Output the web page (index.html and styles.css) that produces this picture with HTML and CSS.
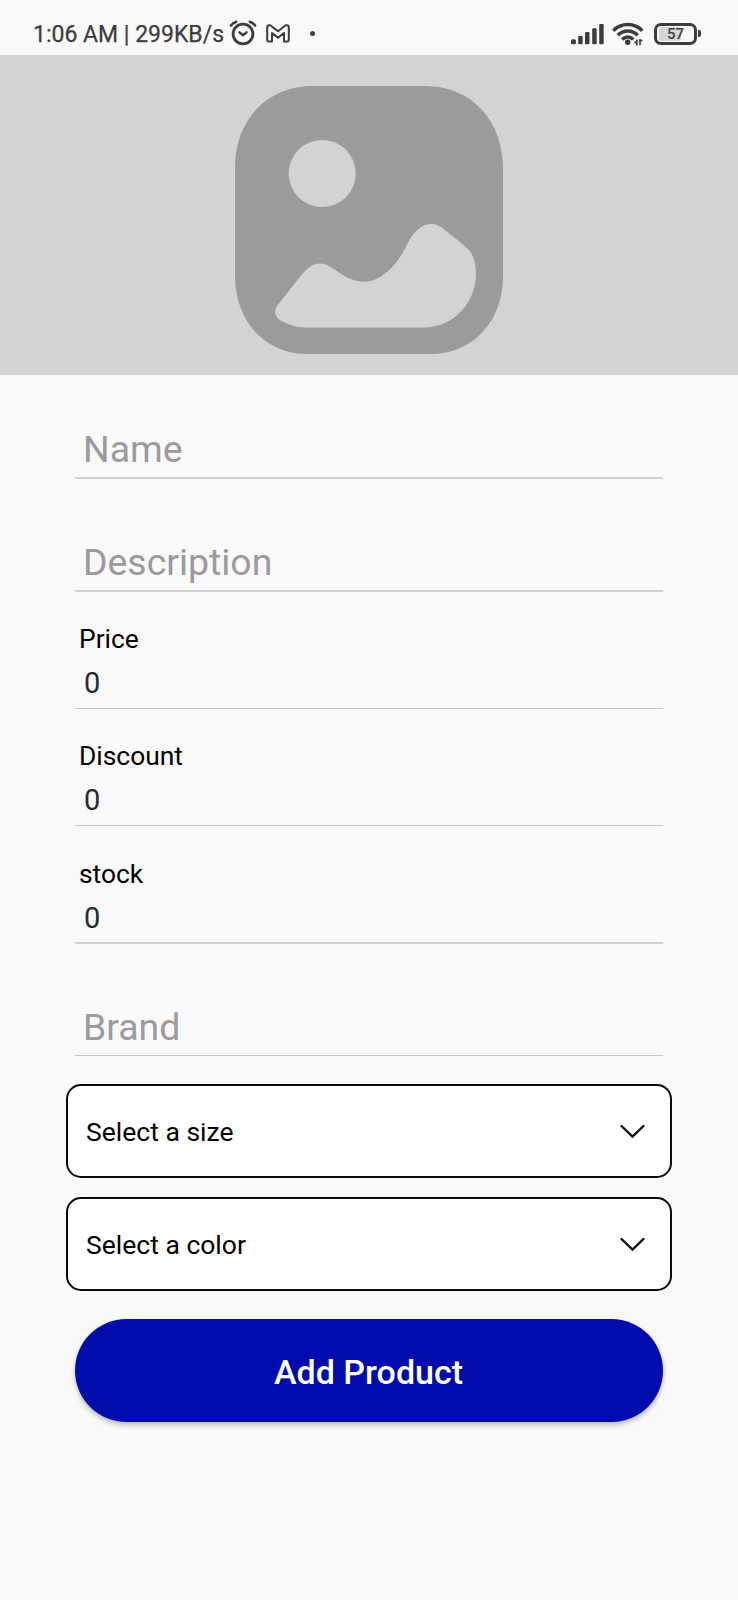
FILE: index.html
```html
<!DOCTYPE html>
<html lang="en">
<head>
<meta charset="utf-8">
<title>Add Product</title>
<link rel="stylesheet" href="styles.css">
</head>
<body>
<header class="status">
  <span class="status-text">1:06 AM | 299KB/s</span>
  <svg class="alarm" width="28" height="26" viewBox="0 0 28 26" fill="none" stroke="#3c3c3c" stroke-linecap="round">
    <circle cx="14" cy="14" r="9.9" stroke-width="2.8"/>
    <path d="M1.9 5.6Q4 2.700 7.200 1.700M26.100 5.600Q24 2.700 20.800 1.700" stroke-width="2.500"/>
    <path d="M10.500 12.300L14 15.200L17.500 12.300" stroke-width="2.400"/>
  </svg>
  <svg class="mail" width="24" height="19" viewBox="0 0 24 19" fill="none" stroke="#3c3c3c" stroke-width="2" stroke-linejoin="round">
    <path d="M1.200 3.200Q1.200 1.200 3.200 1.200H4.300L12 7.200L19.700 1.200H20.800Q22.800 1.200 22.800 3.200V16.200Q22.800 17.600 21.400 17.600H18V9L12 13.600L6 9V17.600H2.600Q1.200 17.600 1.200 16.200Z"/>
  </svg>
  <span class="dot"></span>
  <svg class="signal" width="34" height="22" viewBox="0 0 34 22" fill="#3c3c3c">
    <rect x="0" y="16.300" width="4.900" height="5" rx="1.500"/>
    <rect x="7.200" y="13" width="4.500" height="8.300" rx="1.300"/>
    <rect x="14" y="9" width="4.500" height="12.300" rx="1.300"/>
    <rect x="21.200" y="5.300" width="4.500" height="16" rx="1.300"/>
    <rect x="28.200" y="1" width="4.500" height="20.300" rx="1.300"/>
  </svg>
  <svg class="wifi" width="32" height="24" viewBox="0 0 32 24" fill="none" stroke="#3c3c3c" stroke-width="3.500">
    <path d="M1.200 8.700C9 0.300 22.500 0.300 30.300 8.700"/>
    <path d="M5.800 13.300C11.300 7.700 20.200 7.700 25.700 13.300"/>
    <path d="M10.200 17.500C13.500 14.300 18 14.300 21.300 17.500"/>
    <circle cx="15.700" cy="20.300" r="2.700" fill="#3c3c3c" stroke="none"/>
    <path d="M22.300 20.300H24.800V23.500M24.800 17.500V23M28 17V23M28 18.500H30.500" stroke-width="1.700"/>
  </svg>
  <div class="battery"><span class="battery-fill"></span><span class="battery-num">57</span></div>
  <span class="battery-cap"></span>
</header>

<section class="hero">
  <svg width="268" height="268" viewBox="0 0 268 268">
    <path fill="#9b9b9b" d="M78 0H190C237 0 268 35 268 83V190C268 236 237 268 196 268H72C31 268 0 236 0 190V81C0 35 31 0 78 0Z"/>
    <circle cx="87.200" cy="87.500" r="33.600" fill="#d3d3d3"/>
    <path fill="#d3d3d3" d="M42 220L66 189.500C73 181 79 177.500 84.500 177.500C91 177.500 96 181 101 184.500C109 190 118 195.700 129 195.700C145 195.700 159 182 168.300 165.700L175 153C182 142 189 138 196.700 138C203 138 208 142.500 213 146.500C220 152 227 157.500 233.300 163.500C239 169 241 179 241 188C241 216 219 241.500 189 241.500H71C60 241.500 52 238 45.500 234.500C39 230 39 225 42 220Z"/>
  </svg>
</section>

<main class="form">
  <div class="field first thick"><span class="placeholder">Name</span></div>
  <div class="field tall thick"><span class="placeholder">Description</span></div>
  <div class="field number"><label class="label">Price</label><span class="value">0</span></div>
  <div class="field number"><label class="label">Discount</label><span class="value">0</span></div>
  <div class="field number last thick"><label class="label">stock</label><span class="value">0</span></div>
  <div class="field brand"><span class="placeholder">Brand</span></div>

  <div class="select">
    <span>Select a size</span>
    <svg width="26" height="16" viewBox="0 0 26 16" fill="none" stroke="#111" stroke-width="2.400" stroke-linecap="round"><path d="M2.500 3L13.500 13.500L24.500 3"/></svg>
  </div>
  <div class="select second">
    <span>Select a color</span>
    <svg width="26" height="16" viewBox="0 0 26 16" fill="none" stroke="#111" stroke-width="2.400" stroke-linecap="round"><path d="M2.500 3L13.500 13.500L24.500 3"/></svg>
  </div>
  <button class="submit" type="button">Add Product</button>
</main>
</body>
</html>
```
FILE: styles.css
```css
* { box-sizing: border-box; }
body {
  margin: 0;
  min-height: 1600px;
  background: #f9f9f9;
  font-family: Roboto, sans-serif;
}
svg { display: block; flex: none; }

.status {
  display: flex;
  align-items: flex-start;
  height: 55px;
  color: #3c3c3c;
}
.status-text {
  width: 196px;
  margin: 20px 0 0 33px;
  font-size: 23px;
  line-height: 30px;
  -webkit-text-stroke: 0.25px #3c3c3c;
  white-space: nowrap;
}
.alarm { margin: 20px 0 0; }
.mail { margin: 24px 0 0 9px; }
.dot {
  width: 5px;
  height: 5px;
  margin: 31px 0 0 20px;
  border-radius: 50%;
  background: #3c3c3c;
}
.signal { margin: 23px 0 0 auto; }
.wifi { margin: 22px 0 0 7px; }
.battery {
  position: relative;
  width: 43px;
  height: 22px;
  margin: 23px 0 0 10px;
  border: 3px solid #3c3c3c;
  border-radius: 7px;
  text-align: center;
}
.battery-fill {
  position: absolute;
  inset: 1px 13px 1px 2px;
  border-radius: 2px;
  background: #d6d6d6;
}
.battery-num {
  position: relative;
  display: block;
  font-size: 15px;
  font-weight: 500;
  line-height: 17px;
}
.battery-cap {
  width: 3px;
  height: 7px;
  margin: 30px 37px 0 1px;
  border-radius: 0 2px 2px 0;
  background: #3c3c3c;
}

.hero {
  display: flex;
  justify-content: center;
  height: 320px;
  padding-top: 31px;
  background: #d3d3d3;
}

.form { padding: 0 75px; }
.field {
  display: flex;
  flex-direction: column;
  justify-content: flex-end;
  border-bottom: 1px solid #c5c5c5;
}
.thick { border-bottom: 2px solid #d0d0d0; }
.first { height: 104px; }
.tall { height: 113px; }
.number { height: 117px; }
.last { height: 118px; }
.brand { height: 112px; }
.placeholder {
  padding: 0 0 6px 8px;
  color: #9b9b9b;
  font-size: 37.400px;
  line-height: 44px;
}
.label {
  padding: 0 0 12px 4px;
  color: #000;
  font-size: 26.400px;
  line-height: 30px;
}
.value {
  padding: 0 0 8px 9px;
  color: #242936;
  font-size: 29px;
  line-height: 34px;
}
.last .value { padding-bottom: 7px; }

.select {
  display: flex;
  align-items: center;
  justify-content: space-between;
  height: 94px;
  margin: 28px -9px 0;
  padding: 0 25px 0 18px;
  border: 2px solid #0a0a0a;
  border-radius: 15px;
  background: #fff;
  color: #000;
  font-size: 26.500px;
  line-height: 30px;
}
.select span { padding-top: 2px; }
.select.second { margin-top: 19px; }

.submit {
  display: block;
  width: 100%;
  height: 103px;
  margin: 28px 0 0;
  padding: 3px 1px 0 0;
  border: 0;
  border-radius: 52px;
  background: #000bac;
  box-shadow: 0 3px 5px rgba(0, 0, 0, 0.26);
  color: #fff;
  font: 500 34px/40px Roboto, sans-serif;
}
```
